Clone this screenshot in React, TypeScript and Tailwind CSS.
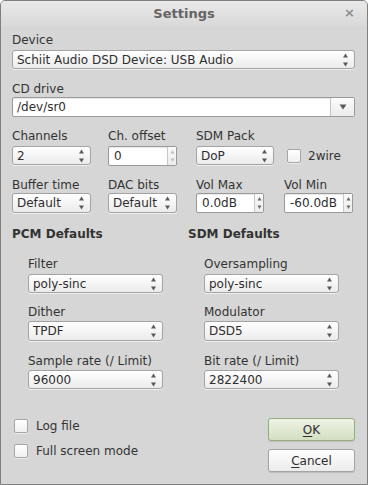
import React from "react";

const font = { fontFamily: '"DejaVu Sans", "Liberation Sans", sans-serif' };

function Arrows({ light = false }: { light?: boolean }) {
  const c = light ? "#b4b4b4" : "#5a5a5a";
  return (
    <svg width="7" height="14" viewBox="0 0 7 14" className="shrink-0">
      <polygon points="1,4.5 3.5,0.5 6,4.5" fill={c} />
      <polygon points="1,9.5 6,9.5 3.5,13.5" fill={c} />
    </svg>
  );
}

function Combo({ w, h, value, full = false }: { w?: string; h: string; value: string; full?: boolean }) {
  return (
    <div
      className={`${full ? "w-full" : w} ${h} flex items-center justify-between rounded-[3px] border border-[#a3a3a3] bg-gradient-to-b from-[#ffffff] to-[#ebebeb] pl-[4px] pr-[5px] shadow-[0_1px_0_rgba(255,255,255,0.6)]`}
    >
      <span className="text-[12px] leading-[14px] text-[#2e2e2e] whitespace-nowrap">{value}</span>
      <Arrows />
    </div>
  );
}

function Spin({ w, value, light = false }: { w: string; value: string; light?: boolean }) {
  return (
    <div className={`${w} h-[20px] flex rounded-[2px] border border-[#9a9a9a] bg-white shadow-[inset_0_1px_1px_rgba(0,0,0,0.1)] overflow-hidden`}>
      <div className="flex-1 flex items-center pl-[5px] text-[12px] leading-[14px] text-[#2e2e2e]">{value}</div>
      <div className="w-[9px] flex items-center justify-center border-l border-[#c8c8c8] bg-gradient-to-b from-[#fafafa] to-[#ececec]">
        <svg width="5" height="14" viewBox="0 0 5 14">
          <polygon points="0.5,4.5 2.5,1 4.5,4.5" fill={light ? "#c0c0c0" : "#6a6a6a"} />
          <polygon points="0.5,9.5 4.5,9.5 2.5,13" fill={light ? "#c0c0c0" : "#6a6a6a"} />
        </svg>
      </div>
    </div>
  );
}

function Check() {
  return (
    <div className="w-[14px] h-[14px] rounded-[2px] border border-[#a6a6a6] bg-gradient-to-b from-[#ffffff] to-[#f0f0f0] shadow-[0_1px_0_rgba(255,255,255,0.5)]" />
  );
}

function Label({ children, className = "" }: { children: React.ReactNode; className?: string }) {
  return <div className={`text-[12px] leading-[14px] text-[#333333] whitespace-nowrap ${className}`}>{children}</div>;
}

export default function App() {
  return (
    <div style={font} className="w-[368px] h-[485px] bg-[#d6d6d6] border border-[#7f7f7f] rounded-t-[5px] overflow-hidden flex flex-col">
      {/* title bar */}
      <div className="h-[26px] shrink-0 relative flex items-center justify-center bg-gradient-to-b from-[#e9e9e9] to-[#d8d8d8]">
        <span className="text-[13px] font-bold text-[#646464] leading-[16px]">Settings</span>
        <span className="absolute right-[12px] top-[5px] text-[13px] font-bold text-[#8c8c8c] leading-[14px]">×</span>
      </div>

      <div className="pl-[11px] pr-[12px] flex flex-col">
        <Label className="mt-[6px]">Device</Label>
        <div className="mt-[3px]">
          <Combo full h="h-[19px]" value="Schiit Audio DSD Device: USB Audio" />
        </div>

        <Label className="mt-[13px]">CD drive</Label>
        <div className="mt-[1px] h-[20px] flex rounded-[2px] border border-[#9a9a9a] bg-white shadow-[inset_0_1px_1px_rgba(0,0,0,0.1)] overflow-hidden">
          <div className="flex-1 flex items-center pl-[4px] text-[12px] leading-[14px] text-[#2e2e2e]">/dev/sr0</div>
          <div className="w-[24px] flex items-center justify-center border-l border-[#c4c4c4] bg-gradient-to-b from-[#fcfcfc] to-[#ebebeb]">
            <svg width="8" height="6" viewBox="0 0 8 6">
              <polygon points="0.5,0.5 7.5,0.5 4,5.5" fill="#5a5a5a" />
            </svg>
          </div>
        </div>

        {/* row 3 */}
        <div className="mt-[12px] grid grid-cols-[96px_88px_88px_1fr]">
          <div className="flex flex-col">
            <Label>Channels</Label>
            <div className="mt-[3px]">
              <Combo w="w-[79px]" h="h-[19px]" value="2" />
            </div>
          </div>
          <div className="flex flex-col">
            <Label>Ch. offset</Label>
            <div className="mt-[3px]">
              <Spin w="w-[69px]" value="0" light />
            </div>
          </div>
          <div className="flex flex-col">
            <Label>SDM Pack</Label>
            <div className="mt-[3px]">
              <Combo w="w-[78px]" h="h-[19px]" value="DoP" />
            </div>
          </div>
          <div className="flex items-end pb-[3px]">
            <div className="flex items-center ml-[3px]">
              <Check />
              <span className="ml-[7px] text-[12px] leading-[14px] text-[#333333]">2wire</span>
            </div>
          </div>
        </div>

        {/* row 4 */}
        <div className="mt-[12px] grid grid-cols-[96px_88px_88px_1fr]">
          <div className="flex flex-col">
            <Label>Buffer time</Label>
            <div className="mt-[1px]">
              <Combo w="w-[79px]" h="h-[20px]" value="Default" />
            </div>
          </div>
          <div className="flex flex-col">
            <Label>DAC bits</Label>
            <div className="mt-[1px]">
              <Combo w="w-[69px]" h="h-[20px]" value="Default" />
            </div>
          </div>
          <div className="flex flex-col">
            <Label>Vol Max</Label>
            <div className="mt-[1px]">
              <Spin w="w-[68px]" value="0.0dB" />
            </div>
          </div>
          <div className="flex flex-col">
            <Label>Vol Min</Label>
            <div className="mt-[1px]">
              <Spin w="w-[69px]" value="-60.0dB" />
            </div>
          </div>
        </div>

        {/* defaults */}
        <div className="mt-[14px] grid grid-cols-[176px_1fr]">
          <div className="flex flex-col">
            <div className="text-[12px] leading-[14px] font-bold text-[#333333]">PCM Defaults</div>
            <div className="pl-[16px] flex flex-col">
              <Label className="mt-[16px]">Filter</Label>
              <div className="mt-[3px]"><Combo w="w-[135px]" h="h-[19px]" value="poly-sinc" /></div>
              <Label className="mt-[12px]">Dither</Label>
              <div className="mt-[2px]"><Combo w="w-[135px]" h="h-[20px]" value="TPDF" /></div>
              <Label className="mt-[13px]">Sample rate (/ Limit)</Label>
              <div className="mt-[2px]"><Combo w="w-[135px]" h="h-[19px]" value="96000" /></div>
            </div>
          </div>
          <div className="flex flex-col">
            <div className="text-[12px] leading-[14px] font-bold text-[#333333]">SDM Defaults</div>
            <div className="pl-[16px] flex flex-col">
              <Label className="mt-[16px]">Oversampling</Label>
              <div className="mt-[3px]"><Combo w="w-[135px]" h="h-[19px]" value="poly-sinc" /></div>
              <Label className="mt-[12px]">Modulator</Label>
              <div className="mt-[2px]"><Combo w="w-[135px]" h="h-[20px]" value="DSD5" /></div>
              <Label className="mt-[13px]">Bit rate (/ Limit)</Label>
              <div className="mt-[2px]"><Combo w="w-[135px]" h="h-[19px]" value="2822400" /></div>
            </div>
          </div>
        </div>

        {/* bottom */}
        <div className="mt-[29px] flex justify-between">
          <div className="flex flex-col pl-[2px]">
            <div className="flex items-center h-[14px] mt-[1px]">
              <Check />
              <span className="ml-[8px] text-[12px] leading-[14px] text-[#333333]">Log file</span>
            </div>
            <div className="flex items-center h-[14px] mt-[11px]">
              <Check />
              <span className="ml-[8px] text-[12px] leading-[14px] text-[#333333]">Full screen mode</span>
            </div>
          </div>
          <div className="flex flex-col w-[87px]">
            <div className="h-[23px] flex items-center justify-center rounded-[3px] border border-[#98ad7c] bg-gradient-to-b from-[#eef3e7] to-[#d3dfc1] shadow-[0_1px_1px_rgba(0,0,0,0.12)] text-[12px] leading-[14px] text-[#2e2e2e]">
              <span><span className="underline underline-offset-2">O</span>K</span>
            </div>
            <div className="mt-[8px] h-[23px] flex items-center justify-center rounded-[3px] border border-[#a3a3a3] bg-gradient-to-b from-[#ffffff] to-[#ebebeb] shadow-[0_1px_1px_rgba(0,0,0,0.12)] text-[12px] leading-[14px] text-[#2e2e2e]">
              <span><span className="underline underline-offset-2">C</span>ancel</span>
            </div>
          </div>
        </div>
      </div>
    </div>
  );
}
